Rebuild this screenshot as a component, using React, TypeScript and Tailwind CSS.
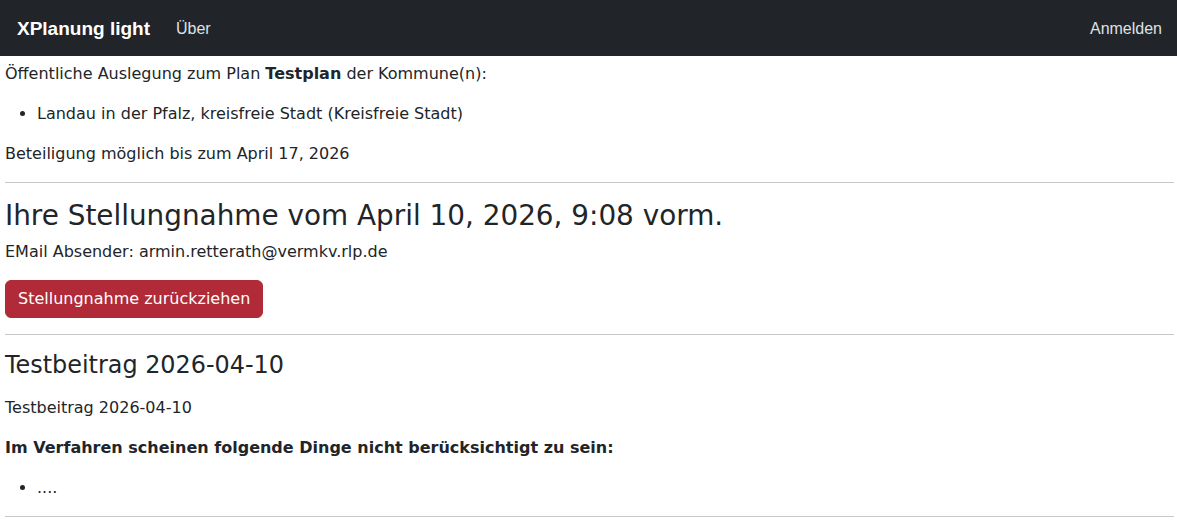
import React from "react";

export default function App() {
  return (
    <div className="min-h-screen bg-white text-[#212529]">
      <nav className="h-[56px] bg-[#212529] flex items-center justify-between pt-[2px] pl-[17px] pr-[15px] font-['Liberation_Sans',Arial,sans-serif]">
        <div className="flex items-center">
          <span className="text-[19px] font-bold text-white leading-[30px]">XPlanung light</span>
          <span className="ml-[26px] text-[16px] text-[#dee2e6] leading-[24px]">Über</span>
        </div>
        <span className="text-[16px] text-[#dee2e6] leading-[24px]">Anmelden</span>
      </nav>
      <main className="pt-[6px] pl-[5px] pr-[3px] text-[16px] leading-[24px] font-['DejaVu_Sans',sans-serif]">
        <p className="mb-[16px]">
          Öffentliche Auslegung zum Plan <b className="font-bold">Testplan</b> der Kommune(n):
        </p>
        <ul className="mb-[16px] pl-[32px] list-disc">
          <li>Landau in der Pfalz, kreisfreie Stadt (Kreisfreie Stadt)</li>
        </ul>
        <p className="mb-[16px]">Beteiligung möglich bis zum April 17, 2026</p>
        <hr className="my-[16px] border-0 border-t border-[#c8c8c8]" />
        <h3 className="text-[27.86px] leading-[33px] mb-[8px] font-normal">
          Ihre Stellungnahme vom April 10, 2026, 9:08 vorm.
        </h3>
        <p className="mb-[16px]">EMail Absender: armin.retterath@vermkv.rlp.de</p>
        <button className="h-[38px] px-[12px] rounded-[6px] bg-[#b02a37] text-white text-[16px] leading-[24px] border border-[#b02a37]">
          Stellungnahme zurückziehen
        </button>
        <hr className="my-[16px] border-0 border-t border-[#c8c8c8]" />
        <h4 className="text-[23.9px] leading-[29px] mb-[16px] font-normal">Testbeitrag 2026-04-10</h4>
        <p className="mb-[16px]">Testbeitrag 2026-04-10</p>
        <p className="mb-[16px] font-bold">Im Verfahren scheinen folgende Dinge nicht berücksichtigt zu sein:</p>
        <ul className="mb-[16px] pl-[32px] list-disc">
          <li>....</li>
        </ul>
        <hr className="my-[16px] border-0 border-t border-[#c8c8c8]" />
      </main>
    </div>
  );
}
